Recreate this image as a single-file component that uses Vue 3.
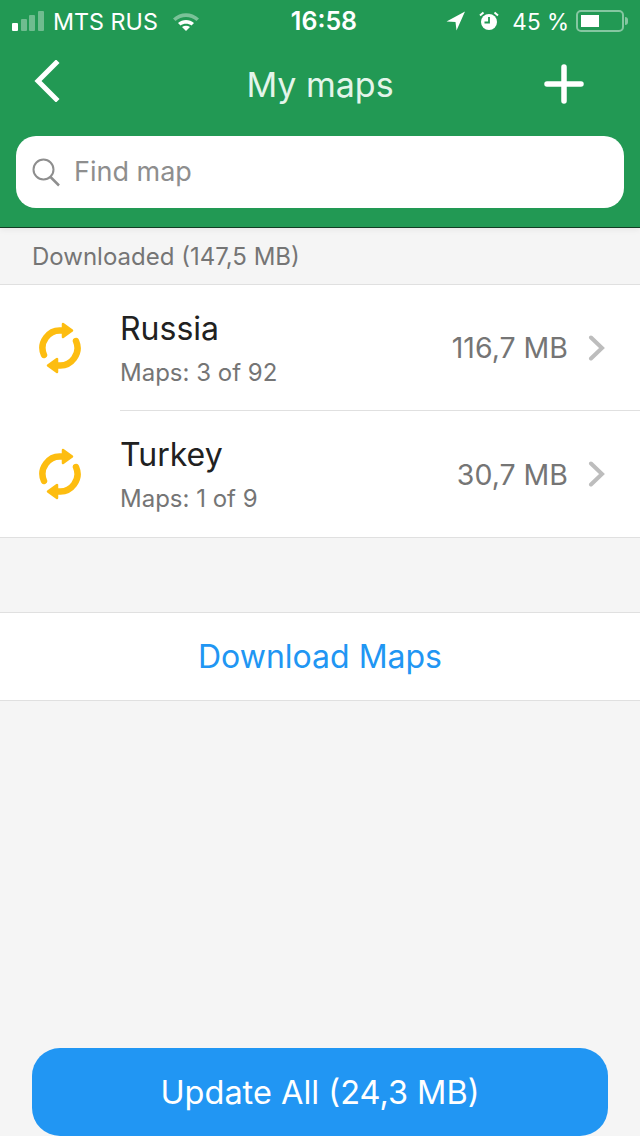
<script setup>
const maps = [
  { name: 'Russia', info: 'Maps: 3 of 92', size: '116,7 MB' },
  { name: 'Turkey', info: 'Maps: 1 of 9', size: '30,7 MB' }
]
</script>

<template>
  <div class="screen">
    <header class="top">
      <div class="status">
        <div class="status-left">
          <span class="signal">
            <i></i>
            <i></i>
            <i></i>
            <i></i>
          </span>
          <span class="carrier">MTS RUS</span>
          <svg class="wifi" width="28" height="20" viewBox="0 0 28 20">
            <path d="M1 7.500C8.500 0.500 19.500 0.500 27 7.500L24.500 10C18.500 4.500 9.500 4.500 3.500 10Z" fill="#fff" opacity="0.4" />
            <path d="M6 12C10.500 8 17.500 8 22 12L19.500 14.500C16.500 12 11.500 12 8.500 14.500Z" fill="#fff" />
            <path d="M10 16C12.500 14.300 15.500 14.300 18 16L14 20Z" fill="#fff" />
          </svg>
        </div>
        <span class="time">16:58</span>
        <div class="status-right">
          <svg width="20" height="20" viewBox="0 0 20 20">
            <path d="M19 0.500L0.500 10.500L9.500 11L10.500 19.500Z" fill="#fff" />
          </svg>
          <svg class="alarm" width="20" height="20" viewBox="0 0 20 20">
            <circle cx="10" cy="11" r="8" fill="#fff" />
            <path d="M10 6V11.500H5.500" fill="none" stroke="#229954" stroke-width="1.800" />
            <path d="M1 4.500L4.500 1.500M19 4.500L15.500 1.500" stroke="#fff" stroke-width="2" />
          </svg>
          <span class="percent">45 %</span>
          <span class="battery"><i></i></span>
          <span class="nub"></span>
        </div>
      </div>
      <div class="nav">
        <svg class="back" width="28" height="42" viewBox="0 0 28 42">
          <path d="M24 3L6 21L24 39" fill="none" stroke="#fff" stroke-width="5" stroke-linecap="square" />
        </svg>
        <h1>My maps</h1>
        <svg class="plus" width="40" height="40" viewBox="0 0 40 40">
          <path d="M20 3V37M3 20H37" stroke="#fff" stroke-width="5.500" stroke-linecap="round" />
        </svg>
      </div>
      <div class="search">
        <svg width="30" height="30" viewBox="0 0 30 30">
          <circle cx="12.500" cy="12.500" r="10" fill="none" stroke="#8e8e8e" stroke-width="2" />
          <path d="M19.500 20L28 28.500" stroke="#8e8e8e" stroke-width="2.500" />
        </svg>
        <span>Find map</span>
      </div>
    </header>

    <div class="section-title">Downloaded (147,5 MB)</div>

    <section class="list">
      <div class="row" v-for="map in maps" :key="map.name">
        <svg class="sync" width="42" height="52" viewBox="0 0 42 52">
          <g fill="#fdbd10" stroke="#fdbd10">
            <path d="M5 33A17.500 17.500 0 0 1 23 8.600" fill="none" stroke-width="6.500" stroke-linecap="round" />
            <path d="M24 2L33 8.500L24 15Z" stroke-width="2.500" stroke-linejoin="round" />
          </g>
          <g transform="rotate(180 21 26)" fill="#fdbd10" stroke="#fdbd10">
            <path d="M5 33A17.500 17.500 0 0 1 23 8.600" fill="none" stroke-width="6.500" stroke-linecap="round" />
            <path d="M24 2L33 8.500L24 15Z" stroke-width="2.500" stroke-linejoin="round" />
          </g>
        </svg>
        <div class="row-body">
          <div class="texts">
            <div class="name">{{ map.name }}</div>
            <div class="info">{{ map.info }}</div>
          </div>
          <span class="size">{{ map.size }}</span>
          <svg class="chev" width="18" height="26" viewBox="0 0 18 26">
            <path d="M3 2.500L14 13L3 23.500" fill="none" stroke="#bdbdbd" stroke-width="4" stroke-linecap="round" />
          </svg>
        </div>
      </div>
    </section>

    <div class="download">Download Maps</div>

    <div class="spacer"></div>

    <div class="footer">
      <button class="update">Update All (24,3 MB)</button>
    </div>
  </div>
</template>

<style scoped>
.screen {
  width: 640px;
  height: 1136px;
  display: flex;
  flex-direction: column;
  background: #f5f5f5;
  font-family: Inter, "Liberation Sans", sans-serif;
  overflow: hidden;
}

.top {
  height: 228px;
  flex: none;
  box-sizing: border-box;
  background: #229954;
  border-bottom: 1px solid #123d24;
  box-shadow: 0 2px 6px rgba(0, 0, 0, 0.06);
  color: #fff;
}

.status {
  height: 42px;
  padding: 0 12px;
  display: grid;
  grid-template-columns: 1fr auto 1fr;
  align-items: center;
  font-size: 23px;
}

.status-left,
.status-right {
  display: flex;
  align-items: center;
}

.status-right {
  justify-content: flex-end;
}

.signal {
  display: flex;
  align-items: flex-end;
  gap: 2.5px;
  height: 20px;
  margin-right: 9.5px;
}

.signal i {
  width: 6px;
  border-radius: 1px;
  background: rgba(255, 255, 255, 0.35);
}

.signal i:nth-child(1) {
  height: 8px;
  background: #fff;
}

.signal i:nth-child(2) {
  height: 12px;
}

.signal i:nth-child(3) {
  height: 16px;
}

.signal i:nth-child(4) {
  height: 20px;
}

.carrier {
  margin-right: 14px;
  font-size: 23.3px;
}

.time {
  margin-left: 8px;
  font-size: 25px;
  font-weight: 600;
}

.alarm {
  margin-left: 13px;
}

.percent {
  margin-left: 13px;
  font-size: 22.5px;
}

.battery {
  width: 48px;
  height: 22px;
  margin-left: 7px;
  padding: 3px;
  box-sizing: border-box;
  border: 2px solid rgba(255, 255, 255, 0.45);
  border-radius: 5px;
}

.battery i {
  display: block;
  width: 18px;
  height: 100%;
  background: #fff;
}

.nub {
  width: 3px;
  height: 8px;
  margin-left: 1px;
  border-radius: 0 3px 3px 0;
  background: rgba(255, 255, 255, 0.45);
}

.nav {
  height: 84px;
  padding: 0 56px 0 32px;
  display: grid;
  grid-template-columns: 1fr auto 1fr;
  align-items: center;
}

.back {
  margin-bottom: 7px;
}

.plus {
  justify-self: end;
}

h1 {
  margin: 0 0 0 24px;
  font-size: 34px;
  font-weight: 400;
  color: #e4f5ea;
}

.search {
  height: 72px;
  margin: 10px 16px 0;
  padding-left: 15px;
  display: flex;
  align-items: center;
  gap: 13px;
  background: #fff;
  border-radius: 20px;
  font-size: 27px;
  line-height: 68px;
  color: #8e8e8e;
}

.section-title {
  height: 56px;
  flex: none;
  padding-left: 32px;
  display: flex;
  align-items: center;
  box-sizing: border-box;
  font-size: 24px;
  color: #757575;
}

.list {
  background: #fff;
  border-top: 1px solid #e0e0e0;
  border-bottom: 1px solid #e0e0e0;
}

.row {
  display: flex;
  align-items: center;
}

.sync {
  width: 42px;
  margin: 0 39px;
  flex: none;
}

.row-body {
  flex: 1;
  height: 126px;
  box-sizing: border-box;
  padding-right: 34px;
  display: flex;
  align-items: center;
}

.row:first-child .row-body {
  border-bottom: 1px solid #e0e0e0;
}

.texts {
  flex: 1;
}

.name {
  font-size: 32px;
  color: #212121;
  margin-bottom: 10px;
}

.info {
  font-size: 24px;
  color: #757575;
}

.size {
  font-size: 28.5px;
  color: #757575;
  margin-right: 20px;
}

.download {
  height: 89px;
  flex: none;
  margin-top: 74px;
  display: flex;
  align-items: center;
  justify-content: center;
  box-sizing: border-box;
  background: #fff;
  border-top: 1px solid #e0e0e0;
  border-bottom: 1px solid #e0e0e0;
  font-size: 32px;
  color: #2196f3;
}

.spacer {
  flex: 1;
}

.footer {
  padding: 0 32px;
}

.update {
  display: block;
  width: 100%;
  height: 88px;
  border: 0;
  border-radius: 28px;
  background: #2196f3;
  color: #fff;
  font-family: inherit;
  font-size: 32.5px;
}
</style>
